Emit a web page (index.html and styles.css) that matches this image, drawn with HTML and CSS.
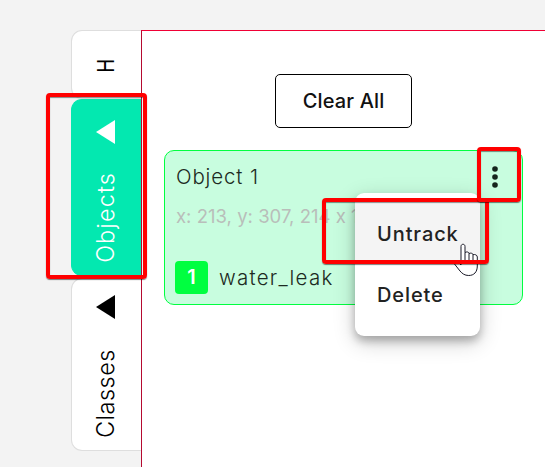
FILE: index.html
```html
<!DOCTYPE html>
<html lang="en">
<head>
<meta charset="utf-8">
<title>Objects</title>
<link rel="stylesheet" href="styles.css">
</head>
<body>
<div class="app">
  <nav class="tabs">
    <div class="tab tab-h"><span class="vertical">H</span></div>
    <div class="tab tab-objects active">
      <svg class="arrow" width="19" height="24" viewBox="0 0 19 24"><path d="M0 12 19 0V24Z"/></svg>
      <span class="vertical">Objects</span>
    </div>
    <div class="tab tab-classes">
      <svg class="arrow" width="19" height="24" viewBox="0 0 19 24"><path d="M0 12 19 0V24Z"/></svg>
      <span class="vertical">Classes</span>
    </div>
  </nav>
  <main class="panel">
    <button class="clear"><span>Clear All</span></button>
    <section class="card">
      <div class="title"><span>Object 1</span>
        <svg class="dots" width="6" height="22" viewBox="0 0 6 22"><circle cx="3" cy="3" r="2.8"/><circle cx="3" cy="11" r="2.8"/><circle cx="3" cy="19" r="2.8"/></svg>
      </div>
      <div class="coords"><span>x: 213, y: 307, 214 x 1</span></div>
      <div class="label"><span class="badge">1</span><span class="name">water_leak</span></div>
    </section>
  </main>
</div>
<div class="menu">
  <div class="item hover"><span class="untrack">Untrack</span></div>
  <div class="item"><span class="delete">Delete</span></div>
</div>
<svg class="cursor" width="26" height="34" viewBox="0 0 26 34"><path d="M7 18V3.500c0-3 4-3 4 0V9.500c1.500-1 4-.6 4 1 1.500-.8 4-.2 4 1.200 1.800-.6 4.300.3 4.300 2.300V23c0 6-3.300 9.500-8.600 9.500-4 0-6.500-1.900-8.700-4.500L.5 21C-.5 19 2 17.500 4 19L7 22Z" fill="#fff" stroke="#191927"/><path d="M11 9.500V17M15 10.500V17M19 11.700V17" fill="none" stroke="#191927"/></svg>
<div class="mark mark-tab"></div>
<div class="mark mark-item"></div>
<div class="mark mark-dots"></div>
</body>
</html>
```
FILE: styles.css
```css
* { box-sizing: border-box; }
body {
  margin: 0;
  width: 545px;
  height: 467px;
  overflow: hidden;
  position: relative;
  background: #f3f3f3;
  color: #1c2a22;
  font-family: Inter, "Liberation Sans", sans-serif;
  font-feature-settings: "calt" 0;
}
.app { display: flex; height: 467px; padding: 30px 0 0 71px; }
.tabs { width: 70px; display: flex; flex-direction: column; }
.tab {
  display: flex;
  flex-direction: column;
  align-items: center;
  background: #fff;
  border: 1px solid #dedede;
  border-right: 0;
  border-radius: 11px 0 0 11px;
  color: #000;
  font-size: 23.500px;
  line-height: 30px;
}
.tab-h { height: 69px; padding-top: 26px; font-weight: 400; }
.tab-objects { height: 177px; padding-top: 20px; }
.tab-classes { height: 173px; margin-top: 2px; padding-top: 16px; }
.active { background: #03e8b0; border-color: #03e8b0; color: #fff; }
.arrow { fill: currentColor; margin-right: 3px; }
.vertical { writing-mode: vertical-rl; transform: rotate(180deg); white-space: nowrap; margin-right: 1px; }
.tab-h .vertical { transform: rotate(180deg) scaleY(.8); }
.tab-objects .vertical, .tab-classes .vertical { margin-top: 28px; font-weight: 300; letter-spacing: 1.100px; }
.tab-classes .vertical { letter-spacing: .5px; margin-top: 30px; }
.panel {
  flex: 1;
  padding: 43px 22px 0 22px;
  background: #fff;
  border-top: 1px solid #f00035;
  border-left: 1px solid #b50a30;
}
.clear {
  display: block;
  width: 137px;
  height: 54px;
  margin-left: 111px;
  padding: 0;
  background: #fff;
  border: 1px solid #000;
  border-radius: 5px;
  color: #111;
  font: 500 20px/52px Inter, sans-serif;
  letter-spacing: .15px;
}
.card {
  height: 155px;
  margin-top: 22px;
  padding: 13px 24px 0 11px;
  background: #c8fddf;
  border: 1px solid #00ff40;
  border-radius: 10px;
}
.title { display: flex; justify-content: space-between; height: 27px; font-size: 20.500px; font-weight: 300; line-height: 26px; letter-spacing: .85px; }
.dots { margin-top: 2px; fill: #15251c; }
.coords { height: 24px; margin-top: 13px; color: #b9beba; font-size: 18.500px; line-height: 25px; white-space: nowrap; letter-spacing: .02px; }
.label { display: flex; align-items: center; height: 33px; margin: 33px 0 0 -1px; font-size: 20.500px; font-weight: 300; }
.name { letter-spacing: 1.250px; }
.badge { width: 33px; height: 33px; margin-right: 11px; background: #00ff40; border-radius: 4px; color: #fff; font-size: 20px; font-weight: 600; line-height: 32px; text-align: center; }
.menu {
  position: absolute;
  left: 355px;
  top: 193px;
  width: 125px;
  height: 143px;
  padding: 10px 0;
  background: #fff;
  border-radius: 9px;
  box-shadow: 0 5px 8px rgba(0,0,0,.25), 0 6px 22px rgba(0,0,0,.2);
}
.item { height: 61px; padding-left: 22px; color: #222; font-size: 20px; font-weight: 500; line-height: 63px; white-space: nowrap; letter-spacing: .9px; }
.hover { background: #f4f4f4; }
.mark { position: absolute; border: 4px solid #f00; border-radius: 4px; box-shadow: 0 1px 1px rgba(0,0,0,.5), inset 0 1px 1px rgba(0,0,0,.45); }
.mark-tab { left: 46px; top: 93px; width: 101px; height: 186px; }
.mark-item { left: 322px; top: 198px; width: 167px; height: 66px; }
.mark-dots { left: 477px; top: 147px; width: 44px; height: 55px; }
.cursor { position: absolute; left: 454px; top: 243px; }
```
